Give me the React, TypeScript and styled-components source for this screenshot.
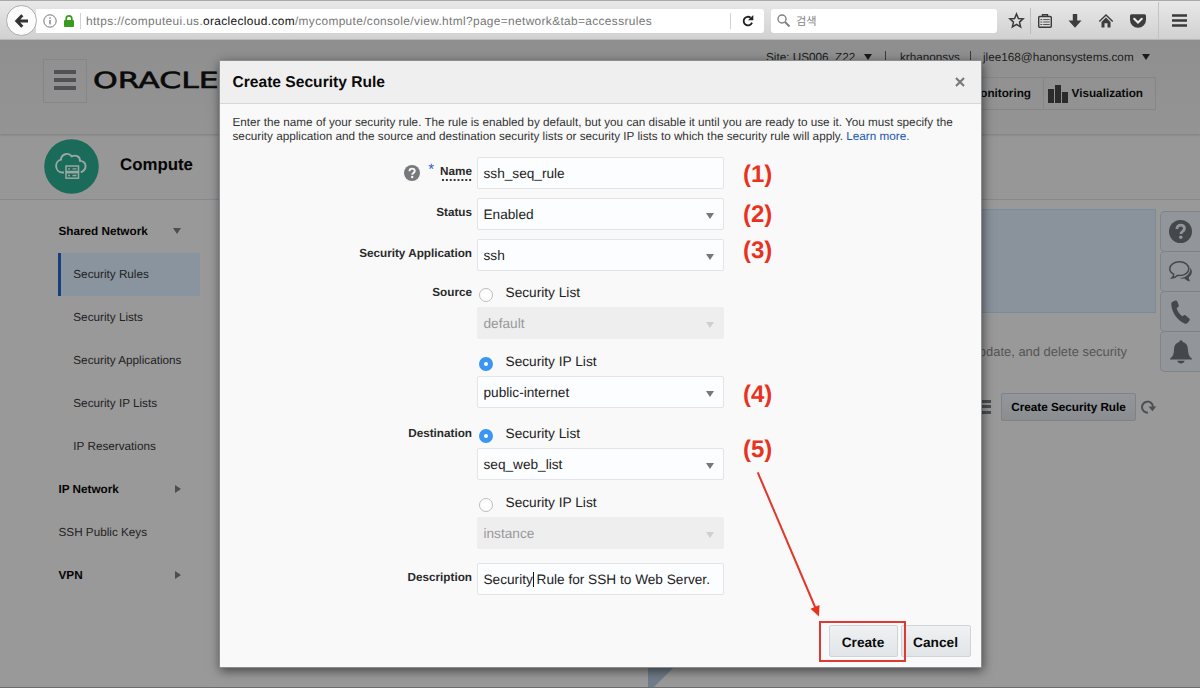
import React from "react";
import styled, { createGlobalStyle } from "styled-components";

const GlobalStyle = createGlobalStyle`
  * { box-sizing: border-box; }
  html, body { margin: 0; padding: 0; }
  body {
    width: 1200px;
    height: 688px;
    overflow: hidden;
    background: #999;
    font-family: "Liberation Sans", Arial, sans-serif;
    font-size: 11.72px;
    color: #1c1c1c;
    text-rendering: geometricPrecision;
  }
  svg { display: block; flex: none; overflow: visible; }
`;

const Window = styled.div`
  position: relative;
  display: flex;
  flex-direction: column;
  width: 1200px;
  height: 688px;
  overflow: hidden;
  border-bottom: 1px solid #6c6c6c;
`;

/* ---------- Browser toolbar ---------- */

const Toolbar = styled.div`
  display: flex;
  align-items: center;
  flex: none;
  height: 40px;
  padding: 1px 0 0 6px;
  border-top: 1px solid #aaa8aa;
  border-bottom: 1px solid #bcbcbc;
  background: linear-gradient(#e9e8e9, #d2d1d2);
`;

const BackButton = styled.div`
  display: flex;
  align-items: center;
  justify-content: center;
  flex: none;
  z-index: 1;
  width: 31px;
  height: 31px;
  border: 1px solid #aeadae;
  border-radius: 50%;
  background: #fbfbfb;
`;

const UrlBar = styled.div`
  display: flex;
  align-items: center;
  flex: none;
  width: 728px;
  height: 24px;
  margin-left: -1px;
  padding-left: 7px;
  border-radius: 0 3px 3px 0;
  background: #fff;
`;

const Divider = styled.div<{ $tall?: boolean }>`
  flex: none;
  width: 1px;
  height: ${(p) => (p.$tall ? 26 : 16)}px;
  background: ${(p) => (p.$tall ? "#bdbdbd" : "#d2d2d2")};
`;

const Url = styled.div`
  flex: 1;
  padding-left: 5px;
  font-size: 11.9px;
  letter-spacing: 0.35px;
  white-space: nowrap;
  color: #777;
  b { font-weight: 400; color: #111; }
`;

const IconCell = styled.div<{ $w: number; $line?: boolean }>`
  display: flex;
  align-items: center;
  justify-content: center;
  flex: none;
  width: ${(p) => p.$w}px;
  height: ${(p) => (p.$line ? 38 : 24)}px;
  margin-left: ${(p) => (p.$line ? 3 : 0)}px;
  border-left: ${(p) => (p.$line ? "1px solid #c3c3c3" : "none")};
`;

const SearchBox = styled.div`
  display: flex;
  align-items: center;
  flex: none;
  gap: 6px;
  width: 226px;
  height: 24px;
  margin: 0 6px 0 7px;
  padding-left: 6px;
  border-radius: 3px;
  background: #fff;
  color: #858585;
  font-family: "Liberation Sans", "Noto Sans CJK KR", sans-serif;
  font-size: 11.2px;
`;

/* ---------- Dimmed console page ---------- */

const Header = styled.header`
  display: flex;
  justify-content: space-between;
  flex: none;
  height: 94px;
  padding-left: 43px;
  background: linear-gradient(#8f8f8f, #949494);
  box-shadow: 0 1px 2px #7e7e7e;
  z-index: 1;
`;

const Brand = styled.div`
  display: flex;
  height: 44px;
  margin-top: 19px;
`;

const MenuButton = styled.div`
  display: flex;
  flex-direction: column;
  justify-content: center;
  align-items: center;
  gap: 4px;
  width: 44px;
  height: 44px;
  padding-bottom: 3px;
  border: 1px solid #858689;
`;

const MenuBar = styled.i`
  width: 22px;
  height: 4px;
  background: #4f5154;
`;

const Logo = styled.div`
  margin-left: 6px;
  width: 130px;
  font-family: "DejaVu Sans", sans-serif;
  font-size: 22.3px;
  line-height: 45px;
  color: #0a0a0a;
  -webkit-text-stroke: 0.6px #0a0a0a;
  transform: scaleX(1.41);
  transform-origin: 0 50%;
`;

const HeaderRight = styled.div`
  display: flex;
  flex-direction: column;
  width: 434px;
`;

const Account = styled.div`
  display: flex;
  align-items: center;
  height: 34px;
  white-space: nowrap;
`;

const AccountText = styled.span<{ $w: number }>`
  width: ${(p) => p.$w}px;
`;

const Bar = styled.span<{ $w: number; $gap?: number }>`
  width: ${(p) => p.$w}px;
  height: 12px;
  margin-left: ${(p) => p.$gap ?? 0}px;
  border-left: 1px solid #3a3a3a;
`;

const Caret = styled.span<{ $color: string; $size?: number; $right?: boolean }>`
  width: 0;
  height: 0;
  border: ${(p) => p.$size ?? 5}px solid transparent;
  ${(p) =>
    p.$right
      ? `border-width: 4.5px 0 4.5px 6px; border-left-color: ${p.$color};`
      : `border-bottom: 0; border-top: 6px solid ${p.$color};`}
`;

const TabStrip = styled.div`
  display: flex;
  align-self: flex-end;
  width: 236px;
  height: 33px;
  margin: 3px 44px 0 0;
  border: 1px solid #848689;
  font-weight: 700;
  color: #0a0a0a;
`;

const Tab = styled.div<{ $w: number; $line?: boolean }>`
  display: flex;
  align-items: center;
  justify-content: flex-end;
  gap: 4px;
  width: ${(p) => p.$w}px;
  padding-right: 12px;
  border-left: ${(p) => (p.$line ? "1px solid #848689" : "none")};
`;

const ServiceBar = styled.div`
  display: flex;
  align-items: center;
  flex: none;
  height: 66px;
  padding: 0 0 0 44px;
  border-bottom: 1px solid #85888c;
  background: #979797;
`;

const ServiceName = styled.h1`
  margin: 0 0 3px 21px;
  font-size: 16.85px;
  line-height: 20px;
  color: #050505;
`;

const Body = styled.div`
  display: flex;
  flex: 1;
`;

const Nav = styled.nav`
  width: 200px;
  padding: 10px 0 0 58px;
`;

const NavRow = styled.div<{ $kind: "group" | "item" | "top"; $active?: boolean }>`
  display: flex;
  align-items: center;
  justify-content: space-between;
  height: 43px;
  padding: 0 19px 1px ${(p) => (p.$kind === "item" ? 12.3 : 0.5)}px;
  border-left: ${(p) =>
    p.$kind === "item" ? `3px solid ${p.$active ? "#173f7d" : "transparent"}` : "none"};
  background: ${(p) => (p.$active ? "#8a949e" : "none")};
  background-clip: padding-box;
  font-weight: ${(p) => (p.$kind === "group" ? 700 : 400)};
  color: ${(p) => (p.$kind === "group" ? "#050505" : "#222")};
  white-space: nowrap;
`;

const Main = styled.main`
  display: flex;
  flex-direction: column;
  align-items: flex-end;
  flex: 1;
  padding: 9px 4px 0 20px;
`;

const Banner = styled.div`
  width: 100%;
  height: 104px;
  border: 1px solid #7c8a99;
  background: #8a929c;
`;

const Intro = styled.div`
  margin: 31px 29px 0 0;
  font-size: 12.95px;
  line-height: 16px;
  color: #555;
`;

const Actions = styled.div`
  display: flex;
  align-items: center;
  margin-top: 33px;
`;

const ListIcon = styled.div`
  width: 16px;
  height: 14px;
  margin-right: 10px;
  background: repeating-linear-gradient(#4c4f53 0 3px, #999 3px 5.3px);
`;

const PageButton = styled.div`
  width: 135px;
  height: 28px;
  margin-right: 5px;
  border: 1px solid #7f8387;
  border-radius: 2px;
  background: linear-gradient(#93969a, #8b8e91);
  font-weight: 700;
  line-height: 27px;
  text-align: center;
  color: #000;
`;

const Rail = styled.aside`
  width: 40px;
  padding-top: 11px;
`;

const RailTile = styled.div`
  display: flex;
  align-items: center;
  justify-content: center;
  height: 41px;
  margin-bottom: -1px;
  border: 1px solid #7f8488;
  border-right: 0;
  border-radius: 5px 0 0 5px;
  background: #92969a;
`;

/* Pointer of the guided-tour callout, peeking out below the dialog */
const TourPointer = styled.svg`
  position: absolute;
  left: 648px;
  top: 667px;
`;

/* ---------- Dialog ---------- */

const Dialog = styled.section`
  position: absolute;
  left: 220px;
  top: 61px;
  z-index: 2;
  display: flex;
  flex-direction: column;
  width: 761px;
  height: 606px;
  background: #f9f9f9;
  box-shadow: 0 0 0 1px #8a8d92, 1px 3px 10px 1px rgba(0, 0, 0, 0.55);
`;

const DialogHead = styled.div`
  display: flex;
  align-items: center;
  justify-content: space-between;
  height: 43px;
  padding: 0 16px 0 12.5px;
  border-bottom: 1px solid #d6d7d9;
  background: #efefef;
`;

const Title = styled.h2`
  margin: 2px 0 0;
  font-size: 15.6px;
  color: #0a0a0a;
`;

const Summary = styled.p`
  margin: 12px 0 12.5px 12.5px;
  font-size: 11.72px;
  line-height: 14.25px;
  white-space: nowrap;
  color: #333;
  a { color: #1b56ad; }
`;

const Row = styled.div<{ $gap: number }>`
  display: flex;
  margin-bottom: ${(p) => p.$gap}px;
`;

const Label = styled.div<{ $top: number }>`
  display: flex;
  justify-content: flex-end;
  width: 252px;
  margin-right: 5px;
  padding-top: ${(p) => p.$top}px;
  font-weight: 700;
  line-height: 14px;
  color: #2a2a2a;
`;

const Hint = styled.span`
  height: 16px;
  background: radial-gradient(circle, #333 0.8px, transparent 1.2px) 1px 100% / 3.9px 2px repeat-x;
`;

const Star = styled.span`
  margin: -2px 6px 0 8px;
  font-size: 15px;
  font-weight: 400;
  color: #2a62c4;
`;

const Fields = styled.div`
  width: 247px;
`;

const Field = styled.div<{ $off?: boolean }>`
  display: flex;
  align-items: center;
  justify-content: space-between;
  height: 32px;
  padding: 2px 9px 0 5.5px;
  border: 1px solid ${(p) => (p.$off ? "#eeeeef" : "#e2e4e8")};
  border-radius: 2px;
  background: ${(p) => (p.$off ? "#eeeeef" : "#fcfdfe")};
  font-size: 13.65px;
  line-height: 16px;
  white-space: nowrap;
  color: ${(p) => (p.$off ? "#999" : "#222")};
  & > ${Caret} { margin-top: 1px; }
`;

const Cursor = styled.i`
  display: inline-block;
  width: 1px;
  height: 15px;
  margin-right: -1px;
  vertical-align: -3px;
  background: #111;
`;

const RadioLine = styled.div<{ $gap?: number }>`
  display: flex;
  align-items: center;
  height: 26px;
  margin-top: ${(p) => p.$gap ?? 0}px;
  padding: 0 0 3px 2px;
  font-size: 13.7px;
  color: #222;
`;

const Radio = styled.span<{ $on?: boolean }>`
  width: 14px;
  height: 14px;
  margin: 4px 12.5px 0 0;
  border: ${(p) => (p.$on ? "5px solid #3b95f3" : "1px solid #bdbdbd")};
  border-radius: 50%;
  background: #fff;
`;

const Footer = styled.div`
  display: flex;
  justify-content: flex-end;
  gap: 3px;
  margin-top: auto;
  padding: 0 10.5px 10px 0;
`;

const Button = styled.div<{ $w: number }>`
  width: ${(p) => p.$w}px;
  height: 32px;
  border: 1px solid #d0d4da;
  border-radius: 2px;
  background: linear-gradient(#eff1f3, #e2e5e8);
  font-size: 13.7px;
  font-weight: 700;
  line-height: 33px;
  text-align: center;
  color: #0a0a0a;
`;

/* ---------- Tutorial annotations, drawn over the dialog ---------- */

const Step = styled.div<{ $y: number }>`
  position: absolute;
  left: 743px;
  top: ${(p) => p.$y}px;
  z-index: 3;
  font-size: 24px;
  font-weight: 700;
  line-height: 28px;
  color: #e8321f;
`;

const Frame = styled.div`
  position: absolute;
  left: 819px;
  top: 621px;
  z-index: 3;
  width: 87px;
  height: 41px;
  border: 2px solid #dc3a32;
`;

const Arrow = styled.svg`
  position: absolute;
  left: 750px;
  top: 465px;
  z-index: 3;
`;

const HelpIcon = ({ size, fill, mark }: { size: number; fill: string; mark: string }) => (
  <svg width={size} height={size} viewBox="0 0 24 24">
    <circle cx="12" cy="12" r="12" fill={fill} />
    <path
      d="M8.2 9.4c0-2.6 1.6-4 3.9-4s4 1.300 4 3.500c0 3-3.700 3.100-3.700 5.600"
      fill="none"
      stroke={mark}
      strokeWidth="2.900"
    />
    <circle cx="12.300" cy="18" r="1.800" fill={mark} />
  </svg>
);

const BrowserToolbar = () => (
  <Toolbar>
    <BackButton>
      <svg width="14" height="14" viewBox="0 0 14 14">
        <path d="M7.300 1.200L1.800 7l5.500 5.800M2 7h11" fill="none" stroke="#333" strokeWidth="3" />
      </svg>
    </BackButton>
    <UrlBar>
      <svg width="14" height="14" viewBox="0 0 14 14">
        <circle cx="7" cy="7" r="6.200" fill="none" stroke="#777" />
        <path d="M7 6v4.500M7 3.200v1.500" stroke="#777" strokeWidth="1.300" />
      </svg>
      <IconCell $w={23}>
        <svg width="10" height="12" viewBox="0 0 10 12">
          <path d="M2.200 6V3.600a2.800 2.800 0 0 1 5.600 0V6" fill="none" stroke="#3a9a1c" strokeWidth="1.700" />
          <rect x="0" y="5" width="10" height="7" rx="1" fill="#3a9a1c" />
        </svg>
      </IconCell>
      <Divider />
      <Url>
        https://computeui.us.<b>oraclecloud.com</b>/mycompute/console/view.html?page=network&amp;tab=accessrules
      </Url>
      <Divider />
      <IconCell $w={33}>
        <svg width="12" height="12" viewBox="0 0 12 12">
          <path d="M10 7.600A4.300 4.300 0 1 1 8.600 2.700" fill="none" stroke="#222" strokeWidth="1.900" />
          <path d="M11.300 0v5.300H6z" fill="#222" />
        </svg>
      </IconCell>
    </UrlBar>
    <SearchBox>
      <svg width="13" height="13" viewBox="0 0 13 13">
        <circle cx="5" cy="5" r="4" fill="none" stroke="#808080" strokeWidth="1.400" />
        <path d="M8 8l4.500 4.500" stroke="#808080" strokeWidth="1.900" />
      </svg>
      <span>검색</span>
    </SearchBox>
    <IconCell $w={27}>
      <svg width="15" height="15" viewBox="0 0 15 15">
        <path
          d="M7.500 1l1.900 4.500 4.700.4-3.600 3.200 1.100 4.800-4.100-2.600-4.100 2.600 1.100-4.800L.900 5.900l4.700-.4z"
          fill="none"
          stroke="#3a3a3a"
          strokeWidth="1.500"
        />
      </svg>
    </IconCell>
    <Divider $tall />
    <IconCell $w={27}>
      <svg width="14" height="14" viewBox="0 0 14 14">
        <rect x=".7" y="2.500" width="12.600" height="10.800" rx="1" fill="none" stroke="#3a3a3a" strokeWidth="1.400" />
        <path d="M4.500 2.500V.800h5v1.700" fill="none" stroke="#3a3a3a" strokeWidth="1.400" />
        <path d="M2.300 5.600h2M2.300 8h2M2.300 10.500h2M5.200 5.600h6.500M5.200 8h6.500M5.200 10.500h6.500" stroke="#555" strokeWidth="1" />
      </svg>
    </IconCell>
    <IconCell $w={34}>
      <svg width="14" height="14" viewBox="0 0 14 14">
        <path d="M4.800 0h4.400v6.500h4.300L7 13.800.5 6.500h4.300z" fill="#3d3d3d" />
      </svg>
    </IconCell>
    <IconCell $w={28}>
      <svg width="14" height="14" viewBox="0 0 14 14">
        <path d="M.3 7.500L7 .900l6.700 6.600" fill="none" stroke="#3d3d3d" strokeWidth="1.400" />
        <path d="M2.500 8L7 3.500 11.500 8v5.500H8.500V9.300h-3v4.200h-3z" fill="#3d3d3d" />
      </svg>
    </IconCell>
    <IconCell $w={35}>
      <svg width="16" height="14" viewBox="0 0 16 14">
        <path d="M1.500.3h13A1.500 1.500 0 0 1 16 1.800V6A8 7.800 0 0 1 0 6V1.800A1.500 1.500 0 0 1 1.500.3z" fill="#3d3d3d" />
        <path d="M4.200 4.800L8 8.500l3.800-3.700" fill="none" stroke="#eee" strokeWidth="2" strokeLinecap="round" />
      </svg>
    </IconCell>
    <IconCell $w={42} $line>
      <svg width="15" height="13" viewBox="0 0 15 13">
        <path d="M0 1.500h15M0 6.500h15M0 11.500h15" stroke="#3a3a3a" strokeWidth="2.400" />
      </svg>
    </IconCell>
  </Toolbar>
);

const ComputeIcon = () => (
  <svg width="55" height="55" viewBox="0 0 55 55">
    <circle cx="27.500" cy="27.500" r="27.300" fill="#1b6b5a" />
    <path
      d="M20 33.500h-1.500a6.500 6.500 0 0 1-1.500-12.800c0-5.400 7.500-8 10.600-3.400 4.700-2 8.700.8 8.300 4.600 6.300.3 8.300 8 .9 11.500"
      fill="none"
      stroke="#9aa8a4"
      strokeWidth="1.900"
    />
    <rect x="22" y="27" width="12.500" height="5.500" fill="none" stroke="#9aa8a4" strokeWidth="1.500" />
    <rect x="22" y="33.700" width="12.500" height="5.500" fill="none" stroke="#9aa8a4" strokeWidth="1.500" />
    <path d="M24 29.800h2M28.500 29.800h4M24 36.500h2M28.500 36.500h4" stroke="#9aa8a4" strokeWidth="1.300" />
  </svg>
);

const Select = ({ value, off }: { value: string; off?: boolean }) => (
  <Field $off={off}>
    <span>{value}</span>
    <Caret $color={off ? "#cfcfd0" : "#777"} $size={4.5} />
  </Field>
);

const navRows: { text: string; kind: "group" | "item" | "top"; active?: boolean; caret?: "down" | "right" }[] = [
  { text: "Shared Network", kind: "group", caret: "down" },
  { text: "Security Rules", kind: "item", active: true },
  { text: "Security Lists", kind: "item" },
  { text: "Security Applications", kind: "item" },
  { text: "Security IP Lists", kind: "item" },
  { text: "IP Reservations", kind: "item" },
  { text: "IP Network", kind: "group", caret: "right" },
  { text: "SSH Public Keys", kind: "top" },
  { text: "VPN", kind: "group", caret: "right" },
];

const steps = [161, 201, 237, 381, 436];

export default function App() {
  return (
    <Window>
      <GlobalStyle />
      <BrowserToolbar />

      <Header>
        <Brand>
          <MenuButton>
            <MenuBar />
            <MenuBar />
            <MenuBar />
          </MenuButton>
          <Logo>ORACLE</Logo>
        </Brand>
        <HeaderRight>
          <Account>
            <AccountText $w={98}>Site: US006_Z22</AccountText>
            <Caret $color="#1a1a1a" $size={4.5} />
            <Bar $w={15} $gap={13} />
            <AccountText $w={69.5}>krhanonsys</AccountText>
            <Bar $w={13.5} />
            <AccountText $w={159}>jlee168@hanonsystems.com</AccountText>
            <Caret $color="#1a1a1a" $size={4.5} />
          </Account>
          <TabStrip>
            <Tab $w={122}>Monitoring</Tab>
            <Tab $w={112} $line>
              <svg width="20" height="18" viewBox="0 0 20 18">
                <path d="M0 4h6v14H0zM7 0h6v18H7zM14 7h6v11h-6z" fill="#2b2b2b" />
              </svg>
              Visualization
            </Tab>
          </TabStrip>
        </HeaderRight>
      </Header>

      <ServiceBar>
        <ComputeIcon />
        <ServiceName>Compute</ServiceName>
      </ServiceBar>

      <Body>
        <Nav>
          {navRows.map((r) => (
            <NavRow key={r.text} $kind={r.kind} $active={r.active}>
              {r.text}
              {r.caret && <Caret $color="#4e4e4e" $size={4.5} $right={r.caret === "right"} />}
            </NavRow>
          ))}
        </Nav>
        <Main>
          <Banner />
          <Intro>update, and delete security</Intro>
          <Actions>
            <ListIcon />
            <PageButton>Create Security Rule</PageButton>
            <svg width="15" height="14" viewBox="0 0 15 14">
              <path d="M7 12.600A5.500 5.500 0 1 1 12 7" fill="none" stroke="#4c4f53" strokeWidth="2" />
              <path d="M7.500 6.500h7.800l-3.900 4.700z" fill="#4c4f53" />
            </svg>
          </Actions>
        </Main>
        <Rail>
          <RailTile>
            <HelpIcon size={23} fill="#45484b" mark="#92969a" />
          </RailTile>
          <RailTile>
            <svg width="23" height="21" viewBox="0 0 23 21">
              <path
                d="M10.500.8c5.400 0 9.300 3 9.300 6.900s-4 6.900-9.300 6.900c-.8 0-1.500-.1-2.200-.2-1.300 1.400-2.900 2.300-5.300 2.500 1-1 1.600-2.200 1.700-3.700C2.300 12 .8 10 .8 7.700.8 3.800 5 .8 10.500.8z"
                fill="none"
                stroke="#45484b"
                strokeWidth="1.500"
              />
              <path d="M21.300 6.500c2.600 3.700 1.800 7.500-1.500 9.500.1 1.600.5 3 1.500 4.500-2.800-.3-4.500-1.300-5.800-2.900-2 .2-3.500 0-5-.6 6.700-.3 11.300-4 10.800-10.500z" fill="#45484b" />
            </svg>
          </RailTile>
          <RailTile>
            <svg width="19" height="24" viewBox="0 0 19 24">
              <path d="M1.500 1.800L4.500.5c.8-.3 1.300 0 1.700.8l1.500 4c.3.800 0 1.400-.6 1.800L5.600 8.300c1 3.300 3 6 5.600 8l1.700-1c.6-.4 1.200-.3 1.800.2l3.600 3c.6.6.7 1.200.2 1.900l-2 2.500c-.7.900-1.800 1-3 .5C6 20 .8 12.500.3 4.500c-.1-1.300.300-2.300 1.200-2.700z" fill="#45484b" />
            </svg>
          </RailTile>
          <RailTile>
            <svg width="22" height="24" viewBox="0 0 22 24">
              <path d="M11 .3c1 0 1.700.7 1.700 1.700 3.500.8 5 3.500 5.200 7 .2 5 1.300 7.500 4 9.500v1H.1v-1c2.700-2 3.800-4.500 4-9.500.2-3.500 1.700-6.200 5.200-7 0-1 .7-1.700 1.700-1.700zM7.300 20.800h7.400c-.5 1.700-2 2.600-3.700 2.600s-3.200-.9-3.700-2.600z" fill="#45484b" />
            </svg>
          </RailTile>
        </Rail>
      </Body>

      <TourPointer width="26" height="20" viewBox="0 0 26 20">
        <path d="M0 0h26L6 20H0z" fill="#707c88" />
      </TourPointer>

      <Dialog>
        <DialogHead>
          <Title>Create Security Rule</Title>
          <svg width="10" height="10" viewBox="0 0 10 10">
            <path d="M1 1l8 8M9 1L1 9" stroke="#74777c" strokeWidth="2.100" />
          </svg>
        </DialogHead>
        <Summary>
          Enter the name of your security rule. The rule is enabled by default, but you can disable it until you are
          ready to use it. You must specify the
          <br />
          security application and the source and destination security lists or security IP lists to which the security
          rule will apply. <a>Learn more.</a>
        </Summary>

        <Row $gap={9}>
          <Label $top={8}>
            <HelpIcon size={16} fill="#77797c" mark="#f9f9f9" />
            <Star>*</Star>
            <Hint>Name</Hint>
          </Label>
          <Fields>
            <Field>ssh_seq_rule</Field>
          </Fields>
        </Row>
        <Row $gap={9}>
          <Label $top={8}>Status</Label>
          <Fields>
            <Select value="Enabled" />
          </Fields>
        </Row>
        <Row $gap={10}>
          <Label $top={8}>Security Application</Label>
          <Fields>
            <Select value="ssh" />
          </Fields>
        </Row>
        <Row $gap={14}>
          <Label $top={5}>Source</Label>
          <Fields>
            <RadioLine>
              <Radio />
              Security List
            </RadioLine>
            <Select value="default" off />
            <RadioLine $gap={11}>
              <Radio $on />
              Security IP List
            </RadioLine>
            <Select value="public-internet" />
          </Fields>
        </Row>
        <Row $gap={14}>
          <Label $top={5}>Destination</Label>
          <Fields>
            <RadioLine>
              <Radio $on />
              Security List
            </RadioLine>
            <Select value="seq_web_list" />
            <RadioLine $gap={11}>
              <Radio />
              Security IP List
            </RadioLine>
            <Select value="instance" off />
          </Fields>
        </Row>
        <Row $gap={0}>
          <Label $top={8}>Description</Label>
          <Fields>
            <Field>
              <span>
                Security
                <Cursor /> Rule for SSH to Web Server.
              </span>
            </Field>
          </Fields>
        </Row>

        <Footer>
          <Button $w={69}>Create</Button>
          <Button $w={70}>Cancel</Button>
        </Footer>
      </Dialog>

      {steps.map((y, i) => (
        <Step key={y} $y={y}>{`(${i + 1})`}</Step>
      ))}
      <Arrow width="75" height="155" viewBox="0 0 75 155">
        <path d="M7.700 7.300L65.500 143" stroke="#e0382c" strokeWidth="2" />
        <path d="M60.500 143.800l9-3.700-.5 11.500z" fill="#e8321f" />
      </Arrow>
      <Frame />
    </Window>
  );
}
